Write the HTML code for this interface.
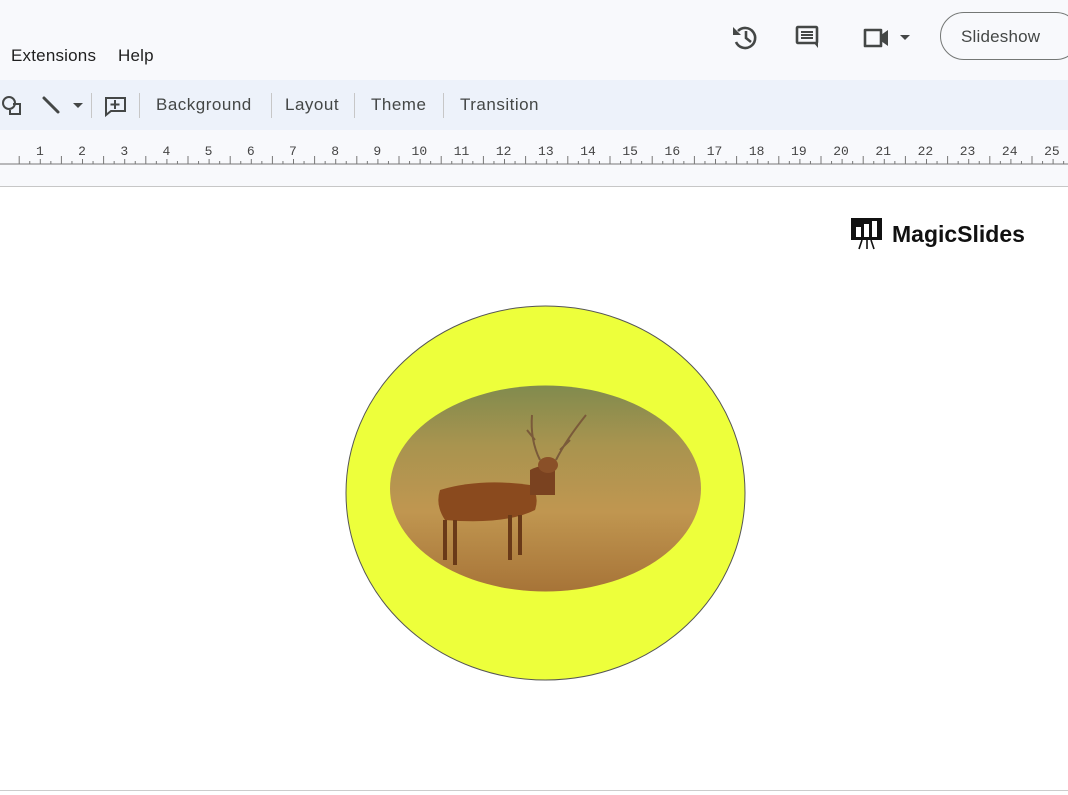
<!DOCTYPE html>
<html><head><style>
body{margin:0;width:1068px;height:795px;background:#fff;font-family:"Liberation Sans",sans-serif;position:relative;overflow:hidden}
.top{position:absolute;left:0;top:0;width:1068px;height:80px;background:#f8f9fc}
.tb{position:absolute;left:0;top:80px;width:1068px;height:50px;background:#edf2fa}
.rul{position:absolute;left:0;top:130px;width:1068px;height:56px;background:#f8f9fc;border-bottom:1px solid #c7c7c7}
.t{position:absolute;color:#1f1f1f;font-size:17px;letter-spacing:0.2px}
.b{position:absolute;color:#444746;font-size:17px;top:95px;letter-spacing:0.5px}
.sep{position:absolute;top:93px;width:1px;height:25px;background:#c7c7c7}
.n{position:absolute;top:144px;font:13px "Liberation Mono",monospace;color:#444}
</style></head><body>
<div class="top"></div><div class="tb"></div><div class="rul"></div>
<div class="t" style="left:11px;top:46px">Extensions</div>
<div class="t" style="left:118px;top:46px">Help</div>
<svg style="position:absolute;left:730px;top:22px" width="200" height="32" viewBox="0 0 200 32">
<g fill="none" stroke="#444746" stroke-width="2.6">
<path d="M8 9 A10 10 0 1 1 6 20"/><path d="M16 9v7l5 4"/>
<rect x="67" y="5" width="20" height="16" rx="1"/>
<path d="M135 8h16v16h-16z" stroke-linejoin="round"/>
</g>
<path d="M3 5v8h8z" fill="#444746"/>
<path d="M71 10h12M71 13h12M71 16h12" stroke="#444746" stroke-width="2"/>
<path d="M84 21l4 5v-5z" fill="#444746"/>
<path d="M151 13l7-5v16l-7-5z" fill="#444746"/>
<path d="M170 13h10l-5 5z" fill="#444746"/>
</svg>
<div style="position:absolute;left:940px;top:12px;width:140px;height:48px;border:1px solid #747775;border-radius:24px;box-sizing:border-box"></div>
<div class="t" style="left:961px;top:27px;color:#444746">Slideshow</div>
<svg style="position:absolute;left:0;top:90px" width="135" height="30">
<circle cx="9" cy="13" r="6" fill="none" stroke="#444746" stroke-width="2"/>
<path d="M13 14h7v10h-10v-4" fill="none" stroke="#444746" stroke-width="2"/>
<path d="M44 8l14 14" stroke="#444746" stroke-width="3" stroke-linecap="round"/>
<path d="M73 13h10l-5 5z" fill="#444746"/>
<path d="M106 8h19v13h-14l-5 4z" fill="none" stroke="#444746" stroke-width="2"/>
<path d="M115 10v9M110.5 14.5h9" stroke="#444746" stroke-width="2"/>
</svg>
<div class="sep" style="left:91px"></div><div class="sep" style="left:139px"></div>
<div class="sep" style="left:271px"></div><div class="sep" style="left:354px"></div><div class="sep" style="left:443px"></div>
<div class="b" style="left:156px">Background</div><div class="b" style="left:285px">Layout</div>
<div class="b" style="left:371px">Theme</div><div class="b" style="left:460px">Transition</div>
<svg style="position:absolute;left:0;top:130px" width="1068" height="40">
<line x1="0" y1="34" x2="1068" y2="34" stroke="#777" stroke-width="1"/>
<g id="tk" stroke="#777"></g>
</svg>
<div id="nums"></div>
<svg style="position:absolute;left:850px;top:217px" width="35" height="33">
<rect x="1" y="1" width="31" height="22" fill="#111"/>
<rect x="6" y="10" width="5" height="10" fill="#fff"/><rect x="14" y="7" width="5" height="13" fill="#fff"/><rect x="22" y="4" width="5" height="16" fill="#fff"/>
<path d="M12 23l-3 9M17 23v9M21 23l3 9" stroke="#111" stroke-width="1.6"/>
</svg>
<div style="position:absolute;left:892px;top:221px;font-size:23px;font-weight:bold;color:#111">MagicSlides</div>
<svg style="position:absolute;left:0;top:0" width="1068" height="795">
<defs>
<linearGradient id="g" x1="0" y1="0" x2="0" y2="1"><stop offset="0" stop-color="#7d8a4e"/><stop offset="0.3" stop-color="#a9944f"/><stop offset="0.6" stop-color="#c09650"/><stop offset="1" stop-color="#a47035"/></linearGradient>
<clipPath id="c"><ellipse cx="545.5" cy="488.5" rx="155.5" ry="103"/></clipPath>
</defs>
<ellipse cx="545.5" cy="493" rx="199.5" ry="187" fill="#edff3b" stroke="#555" stroke-width="1"/>
<g clip-path="url(#c)">
<rect x="380" y="380" width="330" height="220" fill="url(#g)"/>
<path d="M440 490q40-12 90-5q10 10 5 25q-30 15-90 10q-10-15-5-30z" fill="#8a4a1e"/>
<path d="M530 470q15-8 25 0v25h-25z" fill="#7a4220"/>
<ellipse cx="548" cy="465" rx="10" ry="8" fill="#8a5028"/>
<path d="M540 460q-10-20-8-45M556 460q10-20 30-45M560 450l10-10M535 440l-8-10" stroke="#7a5a3a" stroke-width="2" fill="none"/>
<path d="M445 520v40M455 520v45M510 515v45M520 515v40" stroke="#6a3a18" stroke-width="4"/>
</g>
</svg>
<div style="position:absolute;left:0;top:790px;width:1068px;height:1px;background:#ccc"></div>
<script>
var s='',h='';for(var i=0;i<102;i++){var x=19.2+i*10.55;var m=i%4;var l=m==0?8:(m==2?5:3);s+='<line x1="'+x+'" y1="'+(34-l)+'" x2="'+x+'" y2="34"/>';}
document.getElementById('tk').innerHTML=s;
for(var k=1;k<=25;k++){var x=40+(k-1)*42.17;h+='<div class="n" style="left:'+(x-(k>9?8:4))+'px">'+k+'</div>';}
document.getElementById('nums').innerHTML=h;
</script>
</body></html>
